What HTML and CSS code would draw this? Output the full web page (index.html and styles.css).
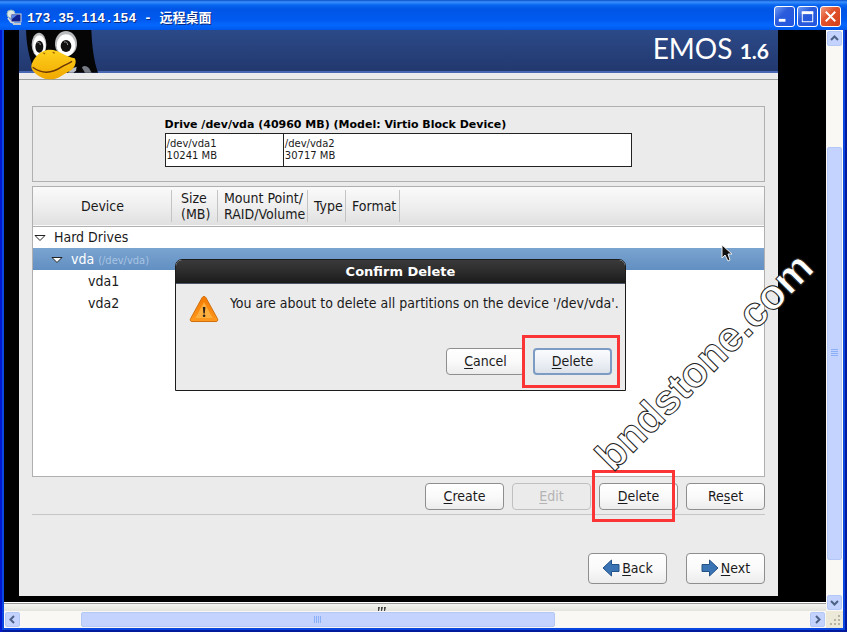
FILE: index.html
```
<!DOCTYPE html>
<html lang="en">
<head>
  <meta charset="utf-8">
  <title>173.35.114.154 - 远程桌面</title>
  <meta name="viewport" content="width=device-width, initial-scale=1.0">
  <link rel="stylesheet" href="styles.css">
</head>
<body>
  <div class="window">
    <header class="titlebar">
      <svg class="app-icon" viewBox="0 0 16 16" aria-hidden="true">
        <circle cx="5" cy="5" r="4" fill="#dfe9e4" stroke="#8fb5c4"/>
        <path d="M2 9l3 4 3 1" fill="none" stroke="#cfd8e8" stroke-width="2"/>
        <rect x="5" y="5" width="10" height="8" fill="#10208c" stroke="#d5d8dc"/>
        <path d="M6 6h5l-5 4z" fill="#5a86e8"/>
        <path d="M7 15h8" stroke="#c3c8cf" stroke-width="2"/>
      </svg>
      <h1>173.35.114.154 - 远程桌面</h1>
      <div class="window-buttons">
        <button type="button" aria-label="Minimize">
          <svg viewBox="0 0 20 20"><path d="M4 14h7" stroke="#fff" stroke-width="3"/></svg>
        </button>
        <button type="button" aria-label="Maximize">
          <svg viewBox="0 0 20 20"><path d="M4 6h12" stroke="#fff" stroke-width="3"/><rect x="4.500" y="5.500" width="11" height="10" fill="none" stroke="#fff"/></svg>
        </button>
        <button type="button" class="close" aria-label="Close">
          <svg viewBox="0 0 20 20"><path d="M5 5l10 10M15 5L5 15" stroke="#fff" stroke-width="2"/></svg>
        </button>
      </div>
    </header>

    <main class="desktop">
      <div class="installer">
        <div class="banner">
          <svg class="tux" viewBox="78 90 219 150" aria-hidden="true">
            <defs>
              <linearGradient id="beak" x1="0" y1="0" x2="0" y2="1">
                <stop offset="0" stop-color="#ffd21e"/>
                <stop offset="1" stop-color="#f0a800"/>
              </linearGradient>
            </defs>
            <path d="M78 90H274C276 140 282 185 294 218H190L100 206C92 180 80 150 78 90Z" fill="#050505"/>
            <path d="M246 203c5-8 14-5 21 2l8 13h-20z" fill="#777b84"/>
            <path d="M214 206l16-6-2 12-8 6h-16z" fill="#b8bcc6"/>
            <ellipse cx="117" cy="134" rx="22" ry="36" fill="#b9bbbd"/>
            <ellipse cx="118" cy="138" rx="19" ry="32" fill="#fff"/>
            <ellipse cx="198" cy="131" rx="33" ry="38" fill="#b9bbbd"/>
            <ellipse cx="198" cy="136" rx="28" ry="33" fill="#fff"/>
            <ellipse cx="118" cy="140" rx="12" ry="18" fill="#111"/>
            <ellipse cx="198" cy="138" rx="16" ry="18" fill="#111"/>
            <path d="M112 128q8-3 9 7M192 126q10-2 11 9" fill="none" stroke="#999" stroke-width="3"/>
            <path d="M94 200C96 180 118 149 150 149C176 149 196 170 224 175C232 186 224 208 204 216C186 226 174 238 150 238C124 238 94 216 94 200Z" fill="url(#beak)"/>
            <path d="M98 202C128 224 160 218 186 200C198 192 210 190 216 184" fill="none" stroke="#6b3505" stroke-width="4"/>
            <path d="M130 158l5 4M158 156l6 4" stroke="#a86a00" stroke-width="4"/>
          </svg>
          <p class="brand">EMOS <small>1.6</small></p>
        </div>

        <div class="content">
          <section class="drive-panel">
            <div class="drive">
              <h2>Drive /dev/vda (40960 MB) (Model: Virtio Block Device)</h2>
              <div class="drive-map">
                <div class="slice" style="flex-grow: 10241">/dev/vda1<br>10241 MB</div>
                <div class="slice" style="flex-grow: 30717">/dev/vda2<br>30717 MB</div>
              </div>
            </div>
          </section>

          <section class="device-list">
            <table>
              <thead>
                <tr>
                  <th class="col-device">Device</th>
                  <th class="col-size">Size (MB)</th>
                  <th class="col-mount">Mount Point/<br>RAID/Volume</th>
                  <th class="col-type">Type</th>
                  <th class="col-format">Format</th>
                  <th></th>
                </tr>
              </thead>
              <tbody>
                <tr>
                  <td class="level-0" colspan="6"><svg class="arrow" viewBox="0 0 12 8"><path d="M1 1.500h10L6 6.500z" fill="#fff" stroke="#222"/></svg>Hard Drives</td>
                </tr>
                <tr class="selected">
                  <td class="level-1" colspan="6"><svg class="arrow" viewBox="0 0 12 8"><path d="M1 1.500h10L6 6.500z" fill="#fff" stroke="#222"/></svg>vda <small>(/dev/vda)</small></td>
                </tr>
                <tr>
                  <td class="level-2" colspan="6">vda1</td>
                </tr>
                <tr>
                  <td class="level-2" colspan="6">vda2</td>
                </tr>
              </tbody>
            </table>

            <div class="dialog" role="dialog" aria-labelledby="dialog-title">
              <h2 id="dialog-title">Confirm Delete</h2>
              <div class="dialog-body">
                <div class="message">
                  <svg class="warning" viewBox="0 0 30 28" aria-hidden="true">
                    <defs>
                      <linearGradient id="warn" x1="0" y1="0" x2="0" y2="1">
                        <stop offset="0" stop-color="#f57900"/>
                        <stop offset="1" stop-color="#ff9a1f"/>
                      </linearGradient>
                    </defs>
                    <path d="M15 1.500c1 0 1.500.5 2 1.300l11.500 21c.8 1.500 0 2.700-1.500 2.700H3c-1.500 0-2.300-1.200-1.500-2.700L13 2.800c.5-.8 1-1.300 2-1.300z" fill="url(#warn)" stroke="#d0700f"/>
                    <path d="M15 7l8.500 16h-17z" fill="#fcaf3e"/>
                    <path d="M13.800 12h2.600l-.6 6.500h-1.400z" fill="#2e2218"/>
                    <circle cx="15.100" cy="20.800" r="1.300" fill="#2e2218"/>
                  </svg>
                  <p>You are about to delete all partitions on the device '/dev/vda'.</p>
                </div>
                <div class="dialog-actions">
                  <button type="button" class="btn"><u>C</u>ancel</button>
                  <span class="marked marked-dialog"><button type="button" class="btn focused"><u>D</u>elete</button></span>
                </div>
              </div>
            </div>

            <svg class="pointer" viewBox="0 0 12 18" aria-hidden="true">
              <path d="M1 1v13l3-3 3 6 2-1-2-6h4z" fill="#111" stroke="#eee"/>
            </svg>
          </section>

          <div class="actions">
            <button type="button" class="btn"><u>C</u>reate</button>
            <button type="button" class="btn" disabled><u>E</u>dit</button>
            <span class="marked marked-list"><button type="button" class="btn"><u>D</u>elete</button></span>
            <button type="button" class="btn">Re<u>s</u>et</button>
          </div>

          <nav class="nav">
            <button type="button" class="btn">
              <svg viewBox="0 0 18 18" aria-hidden="true"><path d="M1 9L9.500 1v4.500H17v7H9.500V17z" fill="#3a74b4" stroke="#245387"/></svg>
              <span><u>B</u>ack</span>
            </button>
            <button type="button" class="btn">
              <svg viewBox="0 0 18 18" aria-hidden="true"><path d="M17 9L8.500 1v4.500H1v7h7.500V17z" fill="#3a74b4" stroke="#245387"/></svg>
              <span><u>N</u>ext</span>
            </button>
          </nav>
        </div>
      </div>

      <svg class="watermark" viewBox="0 0 240 230">
        <text transform="translate(27 215) rotate(-45)">bndstone.com</text>
      </svg>
    </main>

    <div class="scrollbar vertical">
      <button type="button" aria-label="Scroll up"><svg viewBox="0 0 15 15"><path d="M4 9l3.500-3.500L11 9" /></svg></button>
      <div class="space" style="flex-grow: 101"></div>
      <div class="thumb" style="flex-grow: 413"><svg viewBox="0 0 8 8"><path d="M0 .5h7M0 2.500h7M0 4.500h7M0 6.500h7"/></svg></div>
      <div class="space" style="flex-grow: 35"></div>
      <button type="button" aria-label="Scroll down"><svg viewBox="0 0 15 15"><path d="M4 6l3.500 3.500L11 6"/></svg></button>
    </div>

    <div class="strip">
      <svg viewBox="0 0 8 4" aria-hidden="true"><path d="M0 0h2l-1 4H0zM3 0h2l-1 4H3zM6 0h2l-1 4H6z" fill="#444"/></svg>
    </div>

    <div class="scrollbar horizontal">
      <button type="button" aria-label="Scroll left"><svg viewBox="0 0 15 15"><path d="M9 4L5.500 7.500 9 11"/></svg></button>
      <div class="space" style="flex-grow: 61"></div>
      <div class="thumb" style="flex-grow: 473"><svg viewBox="0 0 8 8"><path d="M.5 0v7M2.500 0v7M4.500 0v7M6.500 0v7"/></svg></div>
      <div class="space" style="flex-grow: 255"></div>
      <button type="button" aria-label="Scroll right"><svg viewBox="0 0 15 15"><path d="M6 4l3.500 3.500L6 11"/></svg></button>
    </div>
    <div class="grip">
      <svg viewBox="0 0 12 12" aria-hidden="true"><path d="M9 1h2v2H9zM5 5h2v2H5zM9 5h2v2H9zM1 9h2v2H1zM5 9h2v2H5zM9 9h2v2H9z" fill="#b8b4a2"/></svg>
    </div>
  </div>
</body>
</html>
```
FILE: styles.css
```
* {
  box-sizing: border-box;
}
body {
  margin: 0;
  font-family: "DejaVu Sans Condensed", "DejaVu Sans", sans-serif;
  font-size: 14px;
  color: #1a1a1a;
}
h1, h2, p {
  margin: 0;
}
button {
  font: inherit;
  color: inherit;
  padding: 0;
}
svg {
  display: block;
  flex: none;
}

/* Window frame */
.window {
  display: grid;
  grid-template-columns: 1fr 17px;
  grid-template-rows: 30px 1fr 9px 17px;
  min-height: 100vh;
  padding: 0 4px 4px;
  background: #0a46e0;
  box-shadow: inset 2px 0 #0019cf, inset -2px -2px #001a9e;
}
.titlebar {
  grid-column: 1 / -1;
  display: flex;
  align-items: center;
  gap: 5px;
  margin: 0 -4px;
  padding: 3px 6px 0;
  color: #fff;
  background: linear-gradient(#0a4fc8 0, #3b91ff 2px, #0866f0 5px, #0055e5 9px, #005af0 20px, #0567ff 25px, #0058ea 100%);
}
.titlebar h1 {
  flex: 1;
  font: bold 13px "Liberation Mono", "Noto Sans CJK SC", monospace;
  text-shadow: 1px 1px #0a2a80;
}
.app-icon {
  width: 16px;
  height: 16px;
}
.window-buttons {
  display: flex;
  gap: 2px;
}
.window-buttons button {
  width: 21px;
  height: 21px;
  border: 1px solid #fff;
  border-radius: 3px;
  background: linear-gradient(135deg, #6f9cf5, #2a5bdc 40%, #2257e0);
}
.window-buttons .close {
  background: linear-gradient(135deg, #f09a80, #e2542e 40%, #d23f18);
}

/* Remote screen */
.desktop {
  display: flex;
  position: relative;
  padding: 0 48px 6px 15px;
  background: #000;
}
.installer {
  flex: 1;
  display: flex;
  flex-direction: column;
  background: #ebebeb;
}
.banner {
  display: flex;
  justify-content: space-between;
  align-items: flex-start;
  height: 43px;
  padding: 0 9px 0 7px;
  background: linear-gradient(#2c4a88, #22386f);
  border-bottom: 2px solid #4868b4;
}
.tux {
  position: relative;
  z-index: 1;
  width: 73px;
  height: 50px;
}
.brand {
  font: 28px/36px Lato, sans-serif;
  color: #fff;
}
.brand small {
  font-size: 21px;
  font-weight: bold;
}
.content {
  flex: 1;
  display: flex;
  flex-direction: column;
  margin-top: 6px;
  padding: 26px 13px 12px;
  border-top: 1px solid #9a9f9c;
}
.drive-panel {
  display: flex;
  justify-content: center;
  padding: 10px 0 14px;
  border: 1px solid #b0b0b0;
}
.drive {
  width: 64%;
  font-family: "DejaVu Sans", sans-serif;
}
.drive h2 {
  font-size: 11px;
  line-height: 16px;
  color: #000;
  white-space: nowrap;
}
.drive-map {
  display: flex;
  border: 1px solid #222;
  background: #fff;
}
.slice {
  flex-basis: 0;
  padding: 4px 1px;
  font-size: 10px;
  line-height: 12px;
}
.slice + .slice {
  border-left: 1px solid #222;
}

/* Device tree */
.device-list {
  flex: 1;
  position: relative;
  margin-top: 4px;
  border: 1px solid #b0b0b0;
  background: #fff;
}
table {
  width: 100%;
  border-collapse: collapse;
  table-layout: fixed;
}
thead tr {
  height: 39px;
  background: linear-gradient(#fafafa, #f0f0f0 45%, #e0e0e0);
  border-bottom: 1px solid #b0b0b0;
}
th {
  padding: 0 6px;
  font-weight: normal;
  line-height: 16px;
  text-align: left;
  background: linear-gradient(#c4c4c4, #c4c4c4) right center / 1px 32px no-repeat;
}
th:last-child {
  background: none;
}
.col-device {
  width: 139px;
  text-align: center;
}
.col-size {
  width: 46px;
  padding-left: 9px;
}
.col-mount {
  width: 90px;
  white-space: nowrap;
}
.col-type {
  width: 38px;
}
.col-format {
  width: 54px;
}
td {
  height: 22px;
  padding: 0;
  line-height: 20px;
}
td small {
  font-size: 11px;
  line-height: 1;
  color: #a9c4e2;
}
.selected {
  color: #fff;
  background: linear-gradient(#7aa4d0, #628fc2);
}
.arrow {
  display: inline-block;
  width: 12px;
  height: 8px;
  margin-right: 8px;
}
.level-0 {
  padding-left: 1px;
}
.level-1 {
  padding-left: 18px;
}
.level-2 {
  padding-left: 55px;
}

/* Buttons */
.btn {
  min-width: 79px;
  height: 27px;
  padding-bottom: 2px;
  border: 1px solid #8e8e8e;
  border-radius: 4px;
  background: linear-gradient(#fff, #fafafa 50%, #ececec);
}
.btn:disabled {
  color: #b4b4b4;
  border-color: #c0c0c0;
  background: #ebebeb;
}
.btn.focused {
  border: 2px solid #7d9cc4;
  background: linear-gradient(#fafbfd, #eef1f6 50%, #dde2ea);
}
.btn u {
  text-underline-offset: 2px;
}
.actions {
  display: flex;
  justify-content: flex-end;
  gap: 8px;
  padding: 6px 0 4px;
  border-bottom: 1px solid #c6c6c6;
}
.nav {
  display: flex;
  justify-content: flex-end;
  gap: 19px;
  margin-top: 38px;
}
.nav .btn {
  display: flex;
  justify-content: center;
  align-items: center;
  gap: 2px;
  height: 31px;
}
.nav svg {
  width: 18px;
  height: 18px;
}

/* Red outlines over the Delete buttons */
.marked {
  display: flex;
  position: relative;
}
.marked::after {
  content: "";
  position: absolute;
  border: 3px solid #fb3535;
  pointer-events: none;
}
.marked-dialog::after {
  inset: -13px -8px -13px -11px;
}
.marked-list::after {
  inset: -13px 3px -12px -7px;
}

/* Confirm dialog */
.dialog {
  position: absolute;
  top: 72px;
  left: 142px;
  width: 451px;
  border: 1px solid #1c1c1c;
  border-radius: 7px 7px 0 0;
  background: #ebebeb;
}
.dialog h2 {
  font-family: "DejaVu Sans", sans-serif;
  font-size: 13px;
  line-height: 23px;
  text-align: center;
  color: #fff;
  background: linear-gradient(#3a3a3a, #2c2c2c 50%, #1a1a1a);
  border-bottom: 1px solid #4c5866;
  border-radius: 6px 6px 0 0;
}
.dialog-body {
  padding: 11px 13px 15px;
}
.message {
  display: flex;
  gap: 11px;
}
.message p {
  line-height: 16px;
  white-space: nowrap;
}
.warning {
  width: 30px;
  height: 28px;
}
.dialog-actions {
  display: flex;
  justify-content: flex-end;
  gap: 8px;
  margin-top: 25px;
}
.pointer {
  position: absolute;
  top: 57px;
  right: 31px;
  width: 12px;
  height: 18px;
}
.watermark {
  position: absolute;
  right: 0;
  bottom: 114px;
  width: 240px;
  height: 230px;
  overflow: visible;
  pointer-events: none;
}
.watermark text {
  font: bold 42px "Liberation Sans", sans-serif;
  fill: #fff;
  stroke: #222;
}

/* Scrollbars */
.scrollbar {
  display: flex;
  padding: 1px;
  background: #f9f8f4;
}
.vertical {
  grid-column: 2;
  grid-row: 2 / 4;
  flex-direction: column;
}
.horizontal {
  grid-row: 4;
}
.scrollbar button, .thumb {
  display: flex;
  justify-content: center;
  align-items: center;
  border: 1px solid #b3c8f5;
  border-radius: 2px;
  background: #c3d3fd;
}
.scrollbar button {
  flex: none;
  width: 15px;
  height: 15px;
}
.scrollbar button svg {
  width: 15px;
  height: 15px;
}
.scrollbar button path {
  fill: none;
  stroke: #4d6185;
  stroke-width: 2;
}
.thumb {
  flex-basis: 0;
}
.thumb svg {
  width: 8px;
  height: 8px;
}
.thumb path {
  stroke: #8cb0f8;
}
.strip {
  grid-column: 1;
  grid-row: 3;
  display: flex;
  justify-content: center;
  align-items: flex-end;
  padding-right: 66px;
  background: linear-gradient(#fff 1px, #999 1px, #999 2px, #f2f2ee 2px, #e4e4df);
}
.strip svg {
  width: 8px;
  height: 4px;
}
.grip {
  grid-column: 2;
  grid-row: 4;
  display: flex;
  justify-content: flex-end;
  align-items: flex-end;
  padding: 2px;
  background: #ece9d8;
}
.grip svg {
  width: 12px;
  height: 12px;
}
```
